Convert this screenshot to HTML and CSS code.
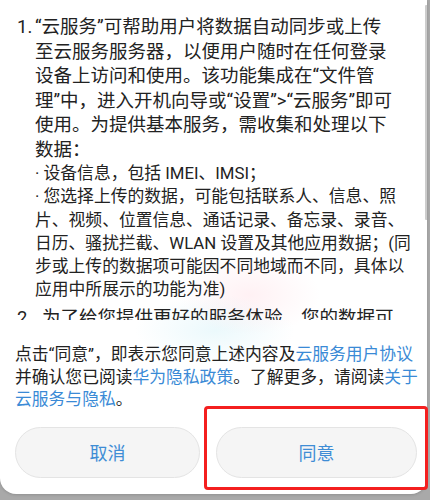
FILE: index.html
```html
<!DOCTYPE html>
<html lang="zh-CN">
<head>
<meta charset="utf-8">
<title>云服务</title>
<link rel="stylesheet" href="styles.css">
</head>
<body>
<div class="card">
  <div class="scroll">
    <ol class="terms">
      <li><span class="num">1.</span><div class="body"><p class="para">“云服务”可帮助用户将数据自动同步或上传<br>至云服务服务器，以便用户随时在任何登录<br>设备上访问和使用。该功能集成在“文件管<br>理”中，进入开机向导或“设置”&gt;“云服务”即可<br>使用。为提供基本服务，需收集和处理以下<br>数据：</p><ul class="items"><li>· 设备信息，包括 IMEI、IMSI；</li><li>· 您选择上传的数据，可能包括联系人、信息、照<br>片、视频、位置信息、通话记录、备忘录、录音、<br>日历、骚扰拦截、WLAN 设置及其他应用数据；(同<br>步或上传的数据项可能因不同地域而不同，具体以<br>应用中所展示的功能为准)</li></ul></div></li>
      <li><span class="num">2.</span><div class="body second"><p class="para">为了给您提供更好的服务体验，您的数据可</p></div></li>
    </ol>
    <div class="scrollbar"></div>
  </div>
  <div class="footer">
    <p class="notice">点击“同意”，即表示您同意上述内容及<a class="link">云服务用户协议</a><br>并确认您已阅读<a class="link">华为隐私政策</a>。了解更多，请阅读<a class="link">关于</a><br><a class="link">云服务与隐私</a>。</p>
    <div class="actions">
      <button class="btn">取消</button>
      <button class="btn">同意</button>
    </div>
    <div class="highlight"></div>
  </div>
</div>
</body>
</html>
```

FILE: styles.css
```css
html, body {
  margin: 0;
  padding: 0;
}
body {
  width: 430px;
  height: 500px;
  overflow: hidden;
  background: #a9a9a9;
  font-family: Roboto, "Noto Sans CJK SC", sans-serif;
  color: #222;
}
.card {
  position: relative;
  width: 427px;
  height: 494px;
  background:
    radial-gradient(ellipse 70px 40px at 250px 295px, rgba(255, 205, 215, 0.28), rgba(255,255,255,0)),
    radial-gradient(ellipse 80px 35px at 215px 330px, rgba(190, 235, 245, 0.3), rgba(255,255,255,0)),
    #fff;
  border-radius: 0 0 16px 16px;
  display: flex;
  flex-direction: column;
  box-shadow: 0 1px 3px rgba(0,0,0,0.15);
}
.scroll {
  position: relative;
  height: 320px;
  flex: none;
  overflow: hidden;
  padding-top: 15px;
  box-sizing: border-box;
}
.terms {
  list-style: none;
  margin: 0;
  padding: 0 0 0 17px;
  font-size: 18.5px;
  line-height: 24.5px;
  white-space: nowrap;
}
.terms > li {
  display: flex;
  margin-bottom: 4px;
}
.num {
  width: 18px;
  flex: none;
}
.para {
  margin: 0;
}
.second {
  padding-left: 7px;
}
.items {
  list-style: none;
  margin: 0;
  padding: 0;
  font-size: 16.8px;
  line-height: 23.3px;
}
.scrollbar {
  position: absolute;
  right: -3px;
  top: 5px;
  width: 5px;
  height: 215px;
  background: #cdcdcd;
  border-radius: 1px;
}
.footer {
  position: relative;
  padding: 23px 10px 17px 15px;
}
.notice {
  margin: 0;
  font-size: 16.8px;
  line-height: 22.5px;
  white-space: nowrap;
  color: #222;
}
.link {
  color: #3a8ad6;
}
.actions {
  display: grid;
  grid-template-columns: 185fr 201fr;
  gap: 16px;
  margin-top: 16px;
}
.btn {
  height: 51px;
  border-radius: 26px;
  border: 1px solid #e4e4e4;
  background: #f5f5f5;
  color: #3f8dd5;
  font-family: Roboto, "Noto Sans CJK SC", sans-serif;
  font-size: 18px;
  padding: 0;
}
.highlight {
  position: absolute;
  left: 204px;
  top: 86px;
  width: 218px;
  height: 78px;
  border: 3px solid #f41f1f;
  border-radius: 4px;
}
```
